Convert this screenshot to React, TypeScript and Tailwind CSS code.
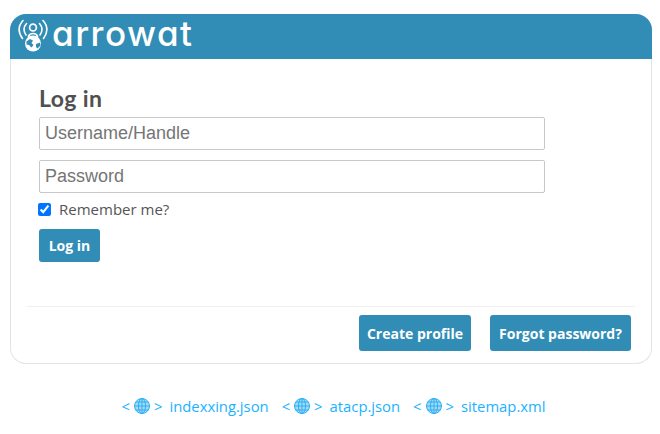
import React from 'react';

const LINKS = ['indexxing.json', 'atacp.json', 'sitemap.xml'];

const Logo = () => (
    <svg width="32" height="34" viewBox="0 0 32 34" fill="none" stroke="white" strokeLinecap="round">
        <path d="M6 1.500C1 7 .8 13 5.500 19.500" strokeWidth="1.600" />
        <path d="M9.500 4.500C6.500 8 6.500 12.500 9 16" strokeWidth="1.600" />
        <path d="M26 1.500C31 7 31.200 13 26.500 19.500" strokeWidth="1.600" />
        <path d="M22.500 4.500C25.500 8 25.500 12.500 23 16" strokeWidth="1.600" />
        <circle cx="16" cy="8.500" r="3.400" strokeWidth="1.700" />
        <path d="M11.500 17.500C12.500 13.500 19.500 13.500 20.500 17.500" strokeWidth="1.700" />
        <circle cx="16" cy="24.500" r="8" fill="white" stroke="none" />
        <path d="M9.500 22.500 13 20 16 21.500 14.500 24 16.500 26 14.500 28.500 12 26 9.500 25.500ZM19 25 23 23.500 23.500 26.500 20.500 29.500 19 28Z" fill="#318db6" stroke="none" />
    </svg>
);

const Globe = () => (
    <svg width="18" height="18" viewBox="0 0 18 18" fill="#a6d9f8" stroke="#2bb0f2" strokeWidth="1">
        <circle cx="9" cy="9" r="7.500" />
        <ellipse cx="9" cy="9" rx="3.500" ry="7.500" fill="none" />
        <path d="M9 1.500V16.500M1.500 9H16.500M2.800 5H15.200M2.800 13H15.200" fill="none" />
    </svg>
);

const Button = ({ label, className }: { label: string; className: string }) => (
    <button className={`rounded-[3px] bg-[#318db6] text-[14px] font-bold text-white ${className}`}>
        {label}
    </button>
);

export default function App() {
    return (
        <div className="h-[434px] w-[660px] overflow-hidden bg-white pl-[10px] pr-2 pt-[14px] font-['Open_Sans',sans-serif] text-[#555]">
            <div className="h-[350px] w-[642px] rounded-[16px] border border-t-0 border-[#e3e3e3]">
                <header className="-mx-px flex h-[45px] items-start gap-[3px] rounded-t-[16px] bg-[#318db6] pl-[7px] pt-[5px]">
                    <Logo />
                    <span className="-mt-[7px] font-['Inter',sans-serif] text-[35px] font-medium leading-[42px] tracking-[1.5px] text-white [font-feature-settings:'cv11']">arrowat</span>
                </header>

                <main className="flex h-[247px] flex-col items-start pl-[28px] pt-[26px]">
                    <h2 className="font-['Lato',sans-serif] text-[23px] font-bold leading-[26px] tracking-[0.4px] text-[#505050]">Log in</h2>
                    <input
                        placeholder="Username/Handle"
                        className="mt-[6px] h-[33px] w-[506px] rounded-[2px] border border-[#c8c8c8] px-[5px] font-['Liberation_Sans',sans-serif] text-[18px] placeholder:text-[#757575]"
                    />
                    <input
                        placeholder="Password"
                        className="mt-[10px] h-[33px] w-[506px] rounded-[2px] border border-[#c8c8c8] px-[5px] font-['Liberation_Sans',sans-serif] text-[18px] placeholder:text-[#757575]"
                    />
                    <label className="-ml-px mt-[7px] flex h-[18px] items-center gap-[8px] text-[15px]">
                        <input type="checkbox" defaultChecked className="m-0 h-[13px] w-[13px] accent-[#0075ff]" />
                        Remember me?
                    </label>
                    <Button label="Log in" className="mt-[11px] h-[33px] w-[61px]" />
                </main>

                <footer className="mx-[16px] flex h-[58px] justify-end gap-[19px] border-t border-[#f0f0f0] pr-[4px] pt-[8px]">
                    <Button label="Create profile" className="h-[36px] w-[112px]" />
                    <Button label="Forgot password?" className="h-[36px] w-[141px]" />
                </footer>
            </div>

            <nav className="mt-[32px] flex w-[642px] justify-center gap-[13px] pl-[5px] text-[14.8px] leading-[20px] text-[#1ab2ff]">
                {LINKS.map((link) => (
                    <a key={link} className="flex items-center">
                        <span>&lt;</span>
                        <span className="mx-[3px]"><Globe /></span>
                        <span className="mr-[7px]">&gt;</span>
                        {link}
                    </a>
                ))}
            </nav>
        </div>
    );
}
